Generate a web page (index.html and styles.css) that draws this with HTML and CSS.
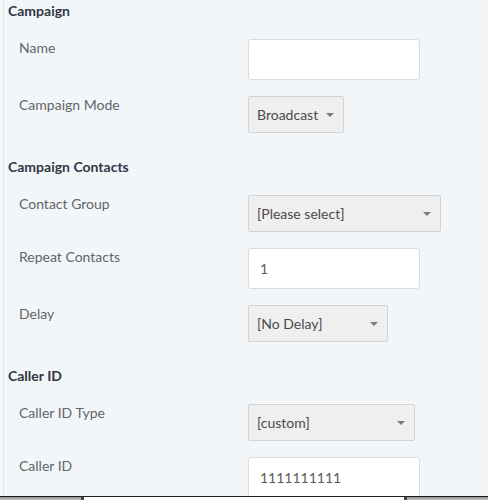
FILE: index.html
```html
<!DOCTYPE html>
<html>
<head>
<meta charset="utf-8">
<link rel="stylesheet" href="styles.css">
</head>
<body>
<div class="page">
  <section class="group">
    <h2 class="group-title">Campaign</h2>
    <div class="row">
      <label class="label">Name</label>
      <div class="input"></div>
    </div>
    <div class="row">
      <label class="label">Campaign Mode</label>
      <div class="select w-mode">Broadcast<span class="caret"></span></div>
    </div>
  </section>
  <section class="group">
    <h2 class="group-title">Campaign Contacts</h2>
    <div class="row">
      <label class="label">Contact Group</label>
      <div class="select w-group">[Please select]<span class="caret"></span></div>
    </div>
    <div class="row">
      <label class="label">Repeat Contacts</label>
      <div class="input">1</div>
    </div>
    <div class="row">
      <label class="label">Delay</label>
      <div class="select w-delay">[No Delay]<span class="caret"></span></div>
    </div>
  </section>
  <section class="group">
    <h2 class="group-title">Caller ID</h2>
    <div class="row">
      <label class="label">Caller ID Type</label>
      <div class="select w-type">[custom]<span class="caret"></span></div>
    </div>
    <div class="row">
      <label class="label">Caller ID</label>
      <div class="input">1111111111</div>
    </div>
  </section>
</div>
<div class="bottom-bar">
  <span class="seg seg-left"></span>
  <span class="notch"></span>
  <span class="seg seg-mid"></span>
  <span class="notch"></span>
  <span class="seg seg-right"></span>
</div>
</body>
</html>
```

FILE: styles.css
```css
html, body {
  margin: 0;
  padding: 0;
  background: #f3f6f9;
  font-family: Lato, "Open Sans", sans-serif;
  font-size: 14px;
  overflow: hidden;
}

.page {
  margin-left: 3px;
  border-left: 1px solid #e2e5e9;
  padding-left: 4px;
  padding-top: 1px;
  min-height: 520px;
}

.group {
  display: flex;
  flex-direction: column;
  gap: 16px;
  margin-bottom: 24px;
}

.group-title {
  margin: 0 0 2px 0;
  font-size: 14px;
  font-weight: bold;
  line-height: 20px;
  color: #303646;
}

.row {
  display: grid;
  grid-template-columns: 229px auto;
  padding-left: 11px;
  align-items: start;
}

.label {
  line-height: 18px;
  color: #626568;
}

.input {
  box-sizing: border-box;
  width: 172px;
  height: 41px;
  background: #fff;
  border: 1px solid #dcdcdc;
  border-radius: 3px;
  padding: 0 11px;
  line-height: 40px;
  color: #5a5a5a;
}

.select {
  box-sizing: border-box;
  position: relative;
  height: 37px;
  background: #efefef;
  border: 1px solid #d2d2d2;
  border-radius: 2px;
  padding: 0 8px;
  line-height: 35px;
  color: #4a4a4a;
}

.caret {
  position: absolute;
  right: 9px;
  top: 16px;
  width: 0;
  height: 0;
  border-left: 4px solid transparent;
  border-right: 4px solid transparent;
  border-top: 4px solid #7a7a7a;
}

.w-mode { width: 96px; }
.w-group { width: 193px; }
.w-delay { width: 140px; }
.w-type { width: 167px; }

.bottom-bar {
  position: fixed;
  left: 0;
  right: 0;
  bottom: 0;
  height: 3px;
  border-top: 1px solid #1e1e1e;
  display: flex;
}

.seg { height: 100%; }
.seg-left {
  width: 81px;
  background: linear-gradient(to bottom, #8d8d8d, #c9c9c9);
}
.seg-mid {
  flex: 1;
  background: #fbfbfb;
}
.seg-right {
  width: 81px;
  background: linear-gradient(to bottom, #8d8d8d, #c9c9c9);
}
.notch {
  width: 3px;
  height: 100%;
  background: #444;
}
```
